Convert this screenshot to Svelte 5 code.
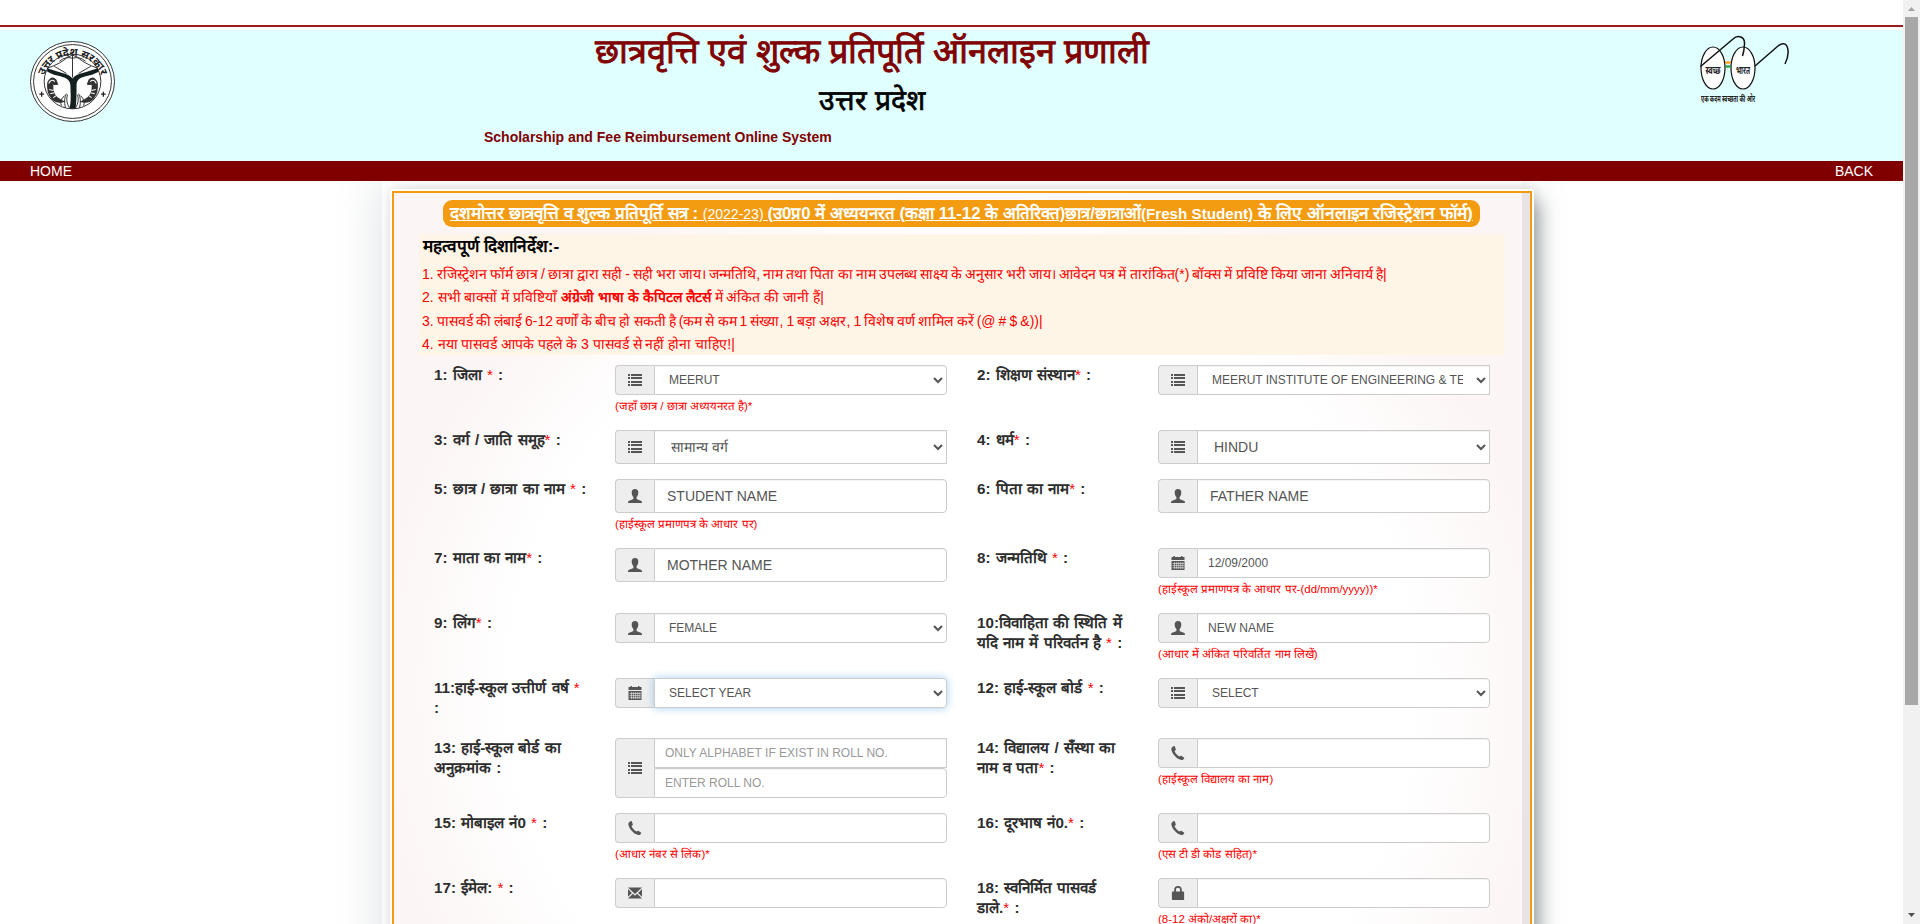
<script>
  const rows = [
    { h: 65, cells: [
      { label: '1: जिला', star: ' *', kind: 'select', size: 'sm', icon: 'list', value: 'MEERUT', hint: '(जहाँ छात्र / छात्रा अध्ययनरत है)*' },
      { label: '2: शिक्षण संस्थान', star: '*', kind: 'select', size: 'sm', square: true, icon: 'list', value: 'MEERUT INSTITUTE OF ENGINEERING & TECHNOLOGY, MEERUT' } ] },
    { h: 49, cells: [
      { label: '3: वर्ग / जाति समूह', star: '*', kind: 'select', size: 'md', square: true, icon: 'list', value: 'सामान्य वर्ग' },
      { label: '4: धर्म', star: '*', kind: 'select', size: 'md', square: true, icon: 'list', value: 'HINDU' } ] },
    { h: 69, cells: [
      { label: '5: छात्र / छात्रा का नाम', star: ' *', kind: 'input', size: 'md', icon: 'user', value: 'STUDENT NAME', hint: '(हाईस्कूल प्रमाणपत्र के आधार पर)' },
      { label: '6: पिता का नाम', star: '*', kind: 'input', size: 'md', icon: 'user', value: 'FATHER NAME' } ] },
    { h: 65, cells: [
      { label: '7: माता का नाम', star: '*', kind: 'input', size: 'md', icon: 'user', value: 'MOTHER NAME' },
      { label: '8: जन्मतिथि', star: ' *', kind: 'input', size: 'sm', icon: 'calendar', value: '12/09/2000', hint: '(हाईस्कूल प्रमाणपत्र के आधार पर-(dd/mm/yyyy))*' } ] },
    { h: 65, cells: [
      { label: '9: लिंग', star: '*', kind: 'select', size: 'sm', icon: 'user', value: 'FEMALE' },
      { label: '10:विवाहिता की स्थिति में\nयदि नाम में परिवर्तन है', star: ' *', kind: 'input', size: 'sm', icon: 'user', value: 'NEW NAME', hint: '(आधार में अंकित परिवर्तित नाम लिखें)' } ] },
    { h: 60, cells: [
      { label: '11:हाई-स्कूल उत्तीर्ण वर्ष', star: ' *', end: '\n:', kind: 'select', size: 'sm', focus: true, icon: 'calendar', value: 'SELECT YEAR' },
      { label: '12: हाई-स्कूल बोर्ड', star: ' *', kind: 'select', size: 'sm', icon: 'list', value: 'SELECT' } ] },
    { h: 75, cells: [
      { label: '13: हाई-स्कूल बोर्ड का\nअनुक्रमांक', star: '', kind: 'double', size: 'sm', icon: 'list', placeholders: ['ONLY ALPHABET IF EXIST IN ROLL NO.', 'ENTER ROLL NO.'] },
      { label: '14: विद्यालय / सँस्था का\nनाम व पता', star: '*', kind: 'input', size: 'sm', icon: 'phone', value: '', hint: '(हाईस्कूल विद्यालय का नाम)' } ] },
    { h: 65, cells: [
      { label: '15: मोबाइल नं0', star: ' *', kind: 'input', size: 'sm', icon: 'phone', value: '', hint: '(आधार नंबर से लिंक)*' },
      { label: '16: दूरभाष नं0.', star: '*', kind: 'input', size: 'sm', icon: 'phone', value: '', hint: '(एस टी डी कोड सहित)*' } ] },
    { h: 65, cells: [
      { label: '17: ईमेल:', star: ' *', kind: 'input', size: 'sm', icon: 'mail', value: '' },
      { label: '18: स्वनिर्मित पासवर्ड\nडाले.', star: '*', kind: 'input', size: 'sm', icon: 'lock', value: '', hint: '(8-12 अंको/अक्षरों का)*' } ] }
  ];
</script>

{#snippet glyph(name)}
  <svg class="glyph" viewBox="0 0 14 14" width="14" height="14" fill="#555">
    {#if name === 'list'}
      <path shape-rendering="crispEdges" d="M0 1h2v2H0zM3 1h11v2H3zM0 4h2v2H0zM3 4h11v2H3zM0 8h2v2H0zM3 8h11v2H3zM0 11h2v2H0zM3 11h11v2H3z" />
    {:else if name === 'user'}
      <path d="M7 0C4.700 0 3.600 1.500 3.700 3.600c0 2 .8 3.500 1.700 4.500v1.300c0 .6-.5.8-1 1L1.200 11.800C.4 12.200 0 12.700 0 14h14c0-1.300-.4-1.800-1.200-2.200l-3.200-1.400c-.5-.2-1-.4-1-1V8.100c.9-1 1.700-2.500 1.700-4.500C10.400 1.500 9.300 0 7 0z" />
    {:else if name === 'calendar'}
      <path d="M.5 1h2V0H4v1h6V0h1.500v1h2v3H.5zM.5 5h13v9H.5z" />
      <path d="M1.500 7.500h11M1.500 9.600h11M1.500 11.700h11M3.500 6v7M5.600 6v7M7.700 6v7M9.800 6v7M11.900 6v7" stroke="#eee" stroke-width=".6" fill="none" />
    {:else if name === 'phone'}
      <path d="M1.100 1.200 2.800 0c.4-.2.8 0 1 .4l1 2.800c.1.400 0 .7-.3 1l-1 .9c.5 1.900 2.800 4.500 5 5.500l1.100-.7c.3-.2.700-.2 1 0l2.300 1.500c.4.300.4.700.2 1.100L12 13.700c-.5.5-1.800.4-3.200-.2C5.200 12 2 8.500.7 4.900.2 3.300.3 1.800 1.100 1.200z" />
    {:else if name === 'mail'}
      <path d="M0 1.500h14L7 8zM0 3l3.900 4L0 10.800zM14 3v7.800L10.100 7zM0 12.500l4.900-4.700L7 9.700l2.100-1.900 4.900 4.700z" />
    {:else}
      <path fill-rule="evenodd" d="M3.200 5.500V3.700C3.200 1.400 4.500 0 7 0s3.800 1.400 3.800 3.700v1.800h1.600c.4 0 .7.300.7.7v7.100c0 .4-.3.700-.7.700H1.600c-.4 0-.7-.3-.7-.7V6.200c0-.4.300-.7.700-.7zM5 5.500h4V3.600C9 2.400 8.400 1.700 7 1.700S5 2.400 5 3.600z" />
    {/if}
  </svg>
{/snippet}

<div class="page">
  <div class="view">
    <header>
      <div class="strip"></div>
      <div class="banner">
        <svg class="emblem" viewBox="0 0 84 80" preserveAspectRatio="none" width="85" height="81">
          <ellipse cx="42" cy="40" rx="41.500" ry="39.500" fill="#fff" stroke="#222" stroke-width=".9" />
          <ellipse cx="42" cy="40" rx="38.500" ry="36.500" fill="none" stroke="#222" stroke-width=".9" />
          <ellipse cx="42" cy="40" rx="28" ry="27" fill="none" stroke="#222" stroke-width=".9" />
          <path id="ring" d="M12.500 43A29.500 28.500 0 0 1 71.500 43" fill="none" />
          <text class="ringtext"><textPath href="#ring" startOffset="50%" text-anchor="middle">उत्तर प्रदेश सरकार</textPath></text>
          <path d="M17 27Q31 22 37 16l5-2 5 2q6 6 20 11M42 14v22M24 25l12 7M60 25l-12 7M29 20q6-5 13-3 7-2 13 3" fill="none" stroke="#222" stroke-width=".9" />
          <path d="M17 27l10 3c7 2 12 3 15 7 3-4 8-5 15-7l10-3 1 3c-6 4-12 4-17 6-4 2-5 4-5 9 0 8 0 15-1 22h-6c2-8 1-15 1-22 0-5-2-7-6-9-5-2-11-2-17-6z" fill="#142020" />
          <path d="M17 41q4-8 9-3l2 5q-4 1-5 0-1 11 8 15l4 2q-9 3-14-3-5-6-4-16zM67 41q-4-8-9-3l-2 5q4 1 5 0 1 11-8 15l-4 2q9 3 14-3 5-6 4-16z" fill="#333" />
          <path d="M18.500 42q2-5 6-2M65.500 42q-2-5-6-2M19 48l4 1M20 52l4-1M23 56l3-2M65 48l-4 1M64 52l-4-1M61 56l-3-2" stroke="#fff" stroke-width="1" fill="none" />
          <path d="M35 66q-2-9 1-14M39 66q-4-6-2-13M49 66q2-9-1-14M45 66q4-6 2-13M31 64q-2-5 3-10M53 64q2-5-3-10" stroke="#222" stroke-width=".9" fill="none" />
          <path d="M11.500 50v5M9.200 52.500h4.600M72.500 50v5M70.200 52.500h4.600" stroke="#222" stroke-width="1.300" />
        </svg>
        <div class="titles">
          <h1>छात्रवृत्ति एवं शुल्क प्रतिपूर्ति ऑनलाइन प्रणाली</h1>
          <h2>उत्तर प्रदेश</h2>
          <p>Scholarship and Fee Reimbursement Online System</p>
        </div>
        <svg class="glasses" viewBox="0 0 92 70" width="92" height="70">
          <g fill="none" stroke="#111" stroke-width="1.200">
            <ellipse cx="14" cy="33" rx="12" ry="21" fill="#fff" />
            <ellipse cx="44" cy="33" rx="12" ry="21" fill="#fff" />
            <path d="M1.500 31.500 34 4c5-5 12-2 11.500 5-.2 5-1 9-2 12M56 31 79 11c5-4 9-3 10 4 .6 5-1 10-3 14" stroke-width="1.500" />
          </g>
          <path d="M26 27.500h6" stroke="#f79a1c" stroke-width="2.200" />
          <path d="M26 31.500h6" stroke="#2a9a3a" stroke-width="2.200" />
          <text x="14" y="39" class="lens" textLength="15" lengthAdjust="spacingAndGlyphs">स्वच्छ</text>
          <text x="44" y="39" class="lens" textLength="14" lengthAdjust="spacingAndGlyphs">भारत</text>
          <text x="29" y="67" class="motto" textLength="54" lengthAdjust="spacingAndGlyphs">एक कदम स्वच्छता की ओर</text>
        </svg>
      </div>
      <nav><a href="#home">HOME</a><a href="#back">BACK</a></nav>
    </header>

    <main>
      <section class="card">
        <div class="heading"><span><b class="a">दशमोत्तर छात्रवृत्ति व शुल्क प्रतिपूर्ति सत्र :{' '}</b>(2022-23){' '}<b class="b">(उ0प्र0 में अध्ययनरत (कक्षा 11-12 के अतिरिक्त)छात्र/छात्राओं</b><b class="c">(Fresh Student)</b><b class="d">{' '}के लिए ऑनलाइन रजिस्ट्रेशन फॉर्म)</b></span></div>
        <div class="guide">
          <h3>महत्वपूर्ण दिशानिर्देश:-</h3>
          <p class="tight">1. रजिस्ट्रेशन फॉर्म छात्र / छात्रा द्वारा सही - सही भरा जाय। जन्मतिथि, नाम तथा पिता का नाम उपलब्ध साक्ष्य के अनुसार भरी जाय। आवेदन पत्र में तारांकित(*) बॉक्स में प्रविष्टि किया जाना अनिवार्य है|</p>
          <p>2. सभी बाक्सों में प्रविष्टियाँ <b>अंग्रेजी भाषा के कैपिटल लैटर्स</b> में अंकित की जानी हैं|</p>
          <p class="tight">3. पासवर्ड की लंबाई 6-12 वर्णों के बीच हो सकती है (कम से कम 1 संख्या, 1 बड़ा अक्षर, 1 विशेष वर्ण शामिल करें (@ # $ &))|</p>
          <p>4. नया पासवर्ड आपके पहले के 3 पासवर्ड से नहीं होना चाहिए!|</p>
        </div>
        <form>
          {#each rows as row}
            <div class="row" style="height:{row.h}px">
              {#each row.cells as c}
                <div class="cell">
                  <div class="label">{c.label}<i>{c.star}</i>{c.end ?? ' :'}</div>
                  <div class="control">
                    <div class="group {c.size}" class:square={c.square}>
                      <span class="addon">{@render glyph(c.icon)}</span>
                      {#if c.kind === 'select'}
                        <select class:focus={c.focus}><option>{c.value}</option></select>
                      {:else if c.kind === 'double'}
                        <div class="stack">
                          {#each c.placeholders as p}<input placeholder={p} />{/each}
                        </div>
                      {:else}
                        <input value={c.value} />
                      {/if}
                    </div>
                    {#if c.hint}<div class="hint">{c.hint}</div>{/if}
                  </div>
                </div>
              {/each}
            </div>
          {/each}
        </form>
      </section>
    </main>
  </div>
  <aside class="scroll">
    <svg width="17" height="17" viewBox="0 0 17 17"><path d="M5 11h7L8.500 7z" fill="#a3a3a3" /></svg>
    <div class="thumb"></div>
    <svg width="17" height="17" viewBox="0 0 17 17"><path d="M5 6h7L8.500 10z" fill="#505050" /></svg>
  </aside>
</div>

<style>
  :global(body) { margin: 0; overflow: hidden; background: #fff; }
  * { box-sizing: border-box; }
  .page { display: flex; height: 924px; overflow: hidden; font: 14px/20px "Liberation Sans", Arial, sans-serif; color: #333; }
  .view { width: 1903px; height: 924px; overflow: hidden; }
  header { position: relative; z-index: 1; }
  .strip { height: 30px; background: #fff; border-bottom: 3px solid #fff; display: flex; align-items: flex-end; }
  .strip::after { content: ""; height: 2px; width: 100%; background: #981b1e; }
  .banner { height: 131px; background: #e0ffff; display: flex; padding: 0 112px 0 30px; }
  .emblem { margin-top: 11px; flex: none; }
  .glasses { margin-top: 5px; flex: none; }
  .ringtext { font: bold 10.500px "Noto Sans", sans-serif; fill: #222; }
  .lens { font: bold 11px "Noto Sans", sans-serif; fill: #222; text-anchor: middle; }
  .motto { font: bold 9.500px "Noto Sans", sans-serif; fill: #222; text-anchor: middle; }
  .titles { width: 780px; flex: none; margin: 0 auto 0 367px; text-align: center; }
  h1, h2, h3, p { margin: 0; }
  h1 { font-size: 34.200px; line-height: 42px; font-weight: 500; color: maroon; white-space: nowrap; -webkit-text-stroke: .9px maroon; }
  h2 { font-size: 28.300px; line-height: 40px; font-weight: 500; color: #000; margin-top: 8px; -webkit-text-stroke: .7px #000; }
  .titles p { text-align: left; font-weight: bold; font-size: 14px; color: maroon; margin: 7px 0 0 2px; }
  nav { height: 20px; background: maroon; display: flex; justify-content: space-between; padding: 0 30px; }
  nav a { color: #fff; text-decoration: none; }
  main { width: 1140px; height: 800px; margin-left: 382px; padding: 8px 0 0 8px; background: #fdfdfe; box-shadow: 0 0 50px 0 #dde0e3; }
  .card { width: 1144px; height: 1200px; border: 2px solid #fff; box-shadow: 10px 6px 18px -6px #929999, 0 0 10px #e0e0e0; outline: 2px solid #f39c12; outline-offset: -4px; padding: 9px 27px 0; background: linear-gradient(to right, transparent 1130px, rgba(70, 70, 90, .1) 1130px), radial-gradient(ellipse 610px 570px at 50% 500px, #fff 74%, #fcf5f5 97%); }
  .heading { width: 1037px; height: 27px; margin-left: 24px; border-radius: 9px; background: #f39c12; color: #fff; text-decoration: underline; text-align: center; white-space: nowrap; font-size: 14px; line-height: 28px; }
  .heading b { line-height: 1; }
  .heading .a { font-size: 17px; }
  .heading .b { font-size: 16.700px; }
  .heading .c { font-size: 15.200px; }
  .heading .d { font-size: 17.300px; }
  .guide { width: 1086px; height: 121px; margin-top: 7px; background: #fff5e6; color: red; padding: 0 3px; white-space: nowrap; }
  .guide h3 { font-size: 17.200px; line-height: 24px; color: #000; font-weight: bold; margin: 0 0 5px 1px; }
  .guide p { line-height: 23.400px; }
  .guide .tight { word-spacing: -.8px; }
  form { padding: 10px 0 0 15px; }
  .row { display: flex; }
  .cell { width: 543px; flex: none; display: flex; }
  .label { width: 151px; flex: none; margin-right: 30px; font-size: 15.200px; word-spacing: 1px; font-weight: bold; color: #2e2e2e; white-space: pre; }
  .label i { font-style: normal; font-weight: normal; color: red; }
  .control { width: 332px; }
  .group { display: flex; font-size: 12px; }
  .addon { width: 39px; flex: none; border: 1px solid #ccc; border-right: 0; border-radius: 4px 0 0 4px; background: #eee; display: flex; align-items: center; justify-content: center; }
  .glyph { display: block; }
  input, select { flex: 1; min-width: 0; width: 100%; height: 30px; border: 1px solid #ccc; border-radius: 0 4px 4px 0; background: #fff; color: #555; margin: 0; font: 12px/18px "Liberation Sans", Arial, sans-serif; padding: 5px 10px; outline: 0; box-shadow: inset 0 1px 1px rgba(0, 0, 0, .05); }
  .md input, .md select { height: 34px; font-size: 14px; line-height: 20px; padding: 6px 12px; }
  .square select { border-radius: 0; }
  select.focus { box-shadow: 0 0 8px rgba(102, 175, 233, .6); }
  .stack { flex: 1; }
  .stack input { display: block; }
  .stack input:first-child { border-radius: 0; }
  input::placeholder { color: #999; }
  .hint { color: red; font-size: 11.500px; line-height: 20px; white-space: nowrap; margin-top: 1px; }
  .scroll { width: 17px; background: #f1f1f1; display: flex; flex-direction: column; }
  .scroll svg { flex: none; }
  .thumb { width: 13px; height: 688px; margin: 0 2px auto; background: #a8a8a8; }
</style>
